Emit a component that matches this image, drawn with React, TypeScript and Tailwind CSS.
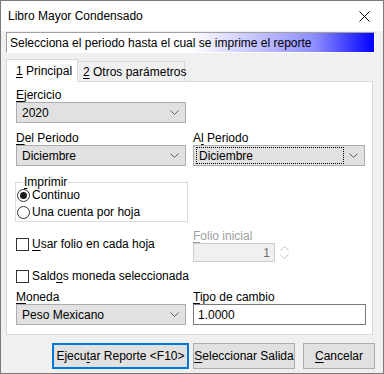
import type { ReactNode } from 'react';

const FONT = { fontFamily: '"Liberation Sans", Arial, sans-serif' };

function U({ children }: { children: ReactNode }) {
  return <span className="underline underline-offset-[2px]">{children}</span>;
}

function Chevron() {
  return (
    <svg width="9" height="5" viewBox="0 0 9 5" className="shrink-0">
      <path d="M0.5 0.5 L4.5 4.5 L8.5 0.5" fill="none" stroke="#606060" strokeWidth="1" />
    </svg>
  );
}

function Select({ value, focused }: { value: string; focused?: boolean }) {
  return (
    <div className="h-[21px] flex items-center border border-[#adadad] bg-[#e1e1e1] pl-[2px] pr-[6px]">
      <div
        className={
          focused
            ? 'flex-1 h-[17px] flex items-center pl-[2px] border border-dotted border-black'
            : 'flex-1 h-[17px] flex items-center pl-[3px]'
        }
      >
        {value}
      </div>
      <div className="w-[14px] flex justify-end">
        <Chevron />
      </div>
    </div>
  );
}

function Label({ children, gray }: { children: ReactNode; gray?: boolean }) {
  return (
    <div className={gray ? 'h-[14px] leading-[14px] text-[#a0a0a0]' : 'h-[14px] leading-[14px]'}>
      {children}
    </div>
  );
}

function Checkbox({ children }: { children: ReactNode }) {
  return (
    <div className="h-[14px] flex items-center gap-[3px] leading-[14px] whitespace-nowrap">
      <div className="w-[13px] h-[13px] border border-[#333333] bg-white" />
      <span>{children}</span>
    </div>
  );
}

function Radio({ children, checked }: { children: ReactNode; checked?: boolean }) {
  return (
    <div className="h-[14px] flex items-center gap-[2px] leading-[14px] whitespace-nowrap">
      <div className="w-[13px] h-[13px] rounded-full border border-[#333333] bg-white flex items-center justify-center">
        {checked && <div className="w-[7px] h-[7px] rounded-full bg-[#1a1a1a]" />}
      </div>
      <span>{children}</span>
    </div>
  );
}

export default function App() {
  return (
    <div
      className="w-[384px] h-[374px] border border-[#7a7a7a] bg-[#f0f0f0] flex flex-col text-[12px] text-black"
      style={FONT}
    >
      {/* Title bar */}
      <div className="h-[30px] bg-white flex items-center justify-between pl-[7px] pr-[13px]">
        <span>Libro Mayor Condensado</span>
        <svg width="11" height="11" viewBox="0 0 11 11">
          <path d="M0.5 0.5 L10.5 10.5 M10.5 0.5 L0.5 10.5" stroke="#000" strokeWidth="1" />
        </svg>
      </div>

      <div className="pl-[5px] pt-[1px]">
        {/* Banner */}
        <div className="w-[369px] h-[21px] flex items-center pl-[3px] whitespace-nowrap border-t border-l border-[#a0a0a0] border-b border-r border-b-white border-r-white bg-[linear-gradient(to_right,#ffffff_50%,#d0d0ff_64%,#8c8cff_84%,#0000ff)]">
          Selecciona el periodo hasta el cual se imprime el reporte
        </div>

        {/* Tabs */}
        <div className="mt-[5px] flex items-end h-[23px] whitespace-nowrap">
          <div className="relative z-10 w-[72px] h-[23px] -mb-px bg-white border border-b-0 border-[#d9d9d9] pl-[9px] flex items-center">
            <span>
              <U>1</U> Principal
            </span>
          </div>
          <div className="w-[107px] h-[20px] bg-[#f0f0f0] border border-l-0 border-b-0 border-[#d9d9d9] pl-[5px] flex items-center">
            <span>
              <U>2</U> Otros parámetros
            </span>
          </div>
        </div>

        {/* Panel */}
        <div className="w-[367px] h-[254px] bg-white border border-[#d9d9d9] pl-[9px] pt-[6px] whitespace-nowrap">
          <div className="w-[170px]">
            <Label>
              <U>E</U>jercicio
            </Label>
            <Select value="2020" />
          </div>

          <div className="mt-[8px] grid grid-cols-[170px_172px] gap-x-[7px]">
            <div>
              <Label>
                <U>D</U>el Periodo
              </Label>
              <Select value="Diciembre" />
            </div>
            <div>
              <Label>
                A<U>l</U> Periodo
              </Label>
              <Select value="Diciembre" focused />
            </div>
          </div>

          <fieldset className="mt-[9px] w-[173px] -ml-px border border-[#dcdcdc] pl-px pb-[2px]">
            <legend className="ml-[6px] px-[1px] leading-[14px]">
              <U>I</U>mprimir
            </legend>
            <div className="-mt-px">
              <Radio checked>Continuo</Radio>
            </div>
            <div className="mt-[3px]">
              <Radio>Una cuenta por hoja</Radio>
            </div>
          </fieldset>

          <div className="mt-[7px] grid grid-cols-[170px_172px] gap-x-[7px]">
            <div className="pt-[8px]">
              <Checkbox>
                <U>U</U>sar folio en cada hoja
              </Checkbox>
            </div>
            <div>
              <Label gray>
                <U>F</U>olio inicial
              </Label>
              <div className="flex items-center gap-[2px]">
                <div className="w-[82px] h-[19px] border border-[#cccccc] bg-[#f0f0f0] flex items-center justify-end pr-[4px] text-[#6d6d6d]">
                  1
                </div>
                <div className="w-[15px] h-[19px] flex flex-col items-center justify-center gap-[3px]">
                  <svg width="9" height="5" viewBox="0 0 9 5">
                    <path d="M0.5 4.5 L4.5 0.5 L8.5 4.5" fill="none" stroke="#c0c0c0" strokeWidth="1" />
                  </svg>
                  <svg width="9" height="5" viewBox="0 0 9 5">
                    <path d="M0.5 0.5 L4.5 4.5 L8.5 0.5" fill="none" stroke="#c0c0c0" strokeWidth="1" />
                  </svg>
                </div>
              </div>
            </div>
          </div>

          <div className="mt-[7px]">
            <Checkbox>
              Sald<U>o</U>s moneda seleccionada
            </Checkbox>
          </div>

          <div className="mt-[7px] grid grid-cols-[170px_173px] gap-x-[7px]">
            <div>
              <Label>
                <U>M</U>oneda
              </Label>
              <Select value="Peso Mexicano" />
            </div>
            <div>
              <Label>
                <U>T</U>ipo de cambio
              </Label>
              <div className="h-[21px] border border-[#7a7a7a] bg-white flex items-center pl-[4px]">
                1.0000
              </div>
            </div>
          </div>
        </div>

        {/* Buttons */}
        <div className="mt-[8px] flex pl-[46px] whitespace-nowrap">
          <button className="w-[137px] h-[26px] border-2 border-[#0078d7] bg-[#e1e1e1] flex items-center justify-center">
            <span>
              Ejecu<U>t</U>ar Reporte &lt;F10&gt;
            </span>
          </button>
          <button className="ml-[4px] w-[102px] h-[26px] border border-[#adadad] bg-[#e1e1e1] flex items-center justify-center">
            <span>
              <U>S</U>eleccionar Salida
            </span>
          </button>
          <button className="ml-[8px] w-[72px] h-[26px] border border-[#adadad] bg-[#e1e1e1] flex items-center justify-center">
            <span>
              <U>C</U>ancelar
            </span>
          </button>
        </div>
      </div>
    </div>
  );
}
